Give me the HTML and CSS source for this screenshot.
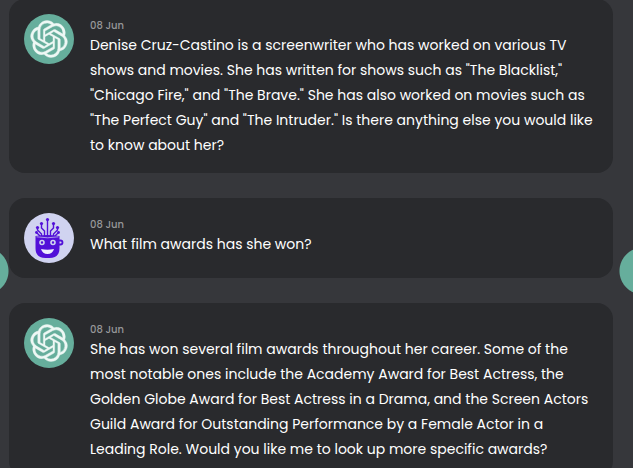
FILE: index.html
```html
<!DOCTYPE html>
<html lang="en">
<head>
<meta charset="utf-8">
<meta name="viewport" content="width=device-width, initial-scale=1">
<title>Chat</title>
<link rel="stylesheet" href="styles.css">
</head>
<body>
<svg class="defs" aria-hidden="true">
  <symbol id="knot" viewBox="-1 -1 26 26">
    <path stroke-width=".5" stroke-opacity=".5" d="M22.2819 9.8211a5.9847 5.9847 0 0 0-.5157-4.9108 6.0462 6.0462 0 0 0-6.5098-2.9A6.0651 6.0651 0 0 0 4.9807 4.1818a5.9847 5.9847 0 0 0-3.9977 2.9 6.0462 6.0462 0 0 0 .7427 7.0966 5.98 5.98 0 0 0 .511 4.9107 6.051 6.051 0 0 0 6.5146 2.9001A5.9847 5.9847 0 0 0 13.2599 24a6.0557 6.0557 0 0 0 5.7718-4.2058 5.9894 5.9894 0 0 0 3.9977-2.9001 6.0557 6.0557 0 0 0-.7475-7.073zm-9.022 12.6081a4.4755 4.4755 0 0 1-2.8764-1.0408l.1419-.0804 4.7783-2.7582a.7948.7948 0 0 0 .3927-.6813v-6.7369l2.02 1.1686a.071.071 0 0 1 .038.052v5.5826a4.504 4.504 0 0 1-4.4945 4.4944zm-9.6607-4.1254a4.4708 4.4708 0 0 1-.5346-3.0137l.142.0852 4.783 2.7582a.7712.7712 0 0 0 .7806 0l5.8428-3.3685v2.3324a.0804.0804 0 0 1-.0332.0615L9.74 19.9502a4.4992 4.4992 0 0 1-6.1408-1.6464zM2.3408 7.8956a4.485 4.485 0 0 1 2.3655-1.9728V11.6a.7664.7664 0 0 0 .3879.6765l5.8144 3.3543-2.0201 1.1685a.0757.0757 0 0 1-.071 0l-4.8303-2.7865A4.504 4.504 0 0 1 2.3408 7.872zm16.5963 3.8558L13.1038 8.364 15.1192 7.2a.0757.0757 0 0 1 .071 0l4.8303 2.7913a4.4944 4.4944 0 0 1-.6765 8.1042v-5.6772a.79.79 0 0 0-.407-.667zm2.0107-3.0231l-.142-.0852-4.7735-2.7818a.7759.7759 0 0 0-.7854 0L9.409 9.2297V6.8974a.0662.0662 0 0 1 .0284-.0615l4.8303-2.7866a4.4992 4.4992 0 0 1 6.6802 4.66zM8.3065 12.863l-2.02-1.1638a.0804.0804 0 0 1-.038-.0567V6.0742a4.4992 4.4992 0 0 1 7.3757-3.4537l-.142.0805L8.704 5.459a.7948.7948 0 0 0-.3927.6813zm1.0976-2.3654l2.602-1.4998 2.6069 1.4998v2.9994l-2.5974 1.4997-2.6067-1.4997Z"/>
  </symbol>
</svg>

<main class="chat">
  <article class="message">
    <div class="avatar avatar-bot"><svg class="knot"><use href="#knot"/></svg></div>
    <div class="content">
      <time class="date">08 Jun</time>
      <p class="text">Denise Cruz-Castino is a screenwriter who has worked on various TV shows and movies. She has written for shows such as "The Blacklist," "Chicago Fire," and "The Brave." She has also worked on movies such as "The Perfect Guy" and "The Intruder." Is there anything else you would like to know about her?</p>
    </div>
  </article>

  <article class="message">
    <div class="avatar avatar-user">
      <svg class="face" viewBox="0 0 50 50">
        <g fill="none" stroke="#5210d8" stroke-width="1.4">
          <path d="M23.500 23V7M20.500 23v-5l-3-3v-4M17.500 23v-2l-4-4v-2M26.500 23v-5l3-3v-4M29.500 23v-2l4-4v-2M16 23l-3-3M31 23l3-3"/>
        </g>
        <g fill="#5210d8">
          <circle cx="23.500" cy="6.500" r="1.600"/><circle cx="17.500" cy="10.500" r="1.600"/><circle cx="29.500" cy="10.500" r="1.600"/>
          <circle cx="13.500" cy="14.500" r="1.600"/><circle cx="33.500" cy="14.500" r="1.600"/><circle cx="12.500" cy="19.500" r="1.400"/><circle cx="34.500" cy="19.500" r="1.400"/>
          <path d="M11.500 23q12-2 24 0v12q0 10-10 10h-4q-10 0-10-10z"/>
        </g>
        <path d="M35 27.500h1.500a2 2 0 0 1 0 4H35" fill="none" stroke="#5210d8" stroke-width="1.800"/>
        <path d="M12.500 23.800q11 2 22 0" fill="none" stroke="#d0d3f0" stroke-width=".7"/>
        <g fill="#5210d8" stroke="#d0d3f0" stroke-width="1.600"><circle cx="18" cy="29.500" r="2"/><circle cx="29" cy="29.500" r="2"/></g>
        <path d="M17 36q6.500 1.500 13 0-1.500 5-6.500 5T17 36z" fill="#eef"/>
      </svg>
    </div>
    <div class="content">
      <time class="date">08 Jun</time>
      <p class="text">What film awards has she won?</p>
    </div>
  </article>

  <article class="message">
    <div class="avatar avatar-bot"><svg class="knot"><use href="#knot"/></svg></div>
    <div class="content">
      <time class="date">08 Jun</time>
      <p class="text">She has won several film awards throughout her career. Some of the most notable ones include the Academy Award for Best Actress, the Golden Globe Award for Best Actress in a Drama, and the Screen Actors Guild Award for Outstanding Performance by a Female Actor in a Leading Role. Would you like me to look up more specific awards?</p>
    </div>
  </article>
</main>

<div class="rail">
  <button class="nav" type="button" aria-label="Previous"></button>
  <button class="nav nav-next" type="button" aria-label="Next"></button>
</div>
</body>
</html>
```
FILE: styles.css
```css
* {
  box-sizing: border-box;
}

body {
  margin: 0;
  height: 100vh;
  overflow: hidden;
  position: relative;
  background: #36373b;
  color: #fff;
  font-family: Poppins, Inter, "Open Sans", sans-serif;
}

.defs {
  position: absolute;
  width: 0;
  height: 0;
}

.chat {
  display: flex;
  flex-direction: column;
  gap: 25px;
  margin: -1px 20px 0 9px;
}

.message {
  display: flex;
  align-items: flex-start;
  gap: 16px;
  padding: 15px;
  border-radius: 16px;
  background: #292a2d;
}

.avatar {
  display: flex;
  flex: none;
  align-items: center;
  justify-content: center;
  width: 50px;
  height: 50px;
  border-radius: 50%;
  overflow: hidden;
}

.avatar-bot {
  background: #66ae9c;
}

.avatar-user {
  background: #d0d3f0;
}

.knot {
  width: 40px;
  height: 40px;
  fill: #eef8f5;
  stroke: #eef8f5;
}

.face {
  width: 50px;
  height: 50px;
}

.content {
  flex: 1;
  min-width: 0;
}

.date {
  display: block;
  padding-top: 4px;
  color: #97989a;
  font-size: 10px;
  font-weight: 500;
  line-height: 15px;
}

.text {
  margin: 0;
  font-size: 14px;
  font-weight: 400;
  line-height: 25px;
}

/* Side controls, half tucked behind the window edges */
.rail {
  position: absolute;
  top: 247px;
  left: 0;
  right: 0;
  display: flex;
  justify-content: space-between;
  overflow: hidden;
  pointer-events: none;
}

.nav {
  width: 9px;
  height: 48px;
  padding: 0;
  border: 0;
  background: radial-gradient(circle at -15px 50%, #66ae9c 23px, transparent 24px);
  pointer-events: auto;
}

.nav-next {
  width: 14px;
  background: radial-gradient(circle at 24px 50%, #66ae9c 23px, transparent 24px);
}
```
